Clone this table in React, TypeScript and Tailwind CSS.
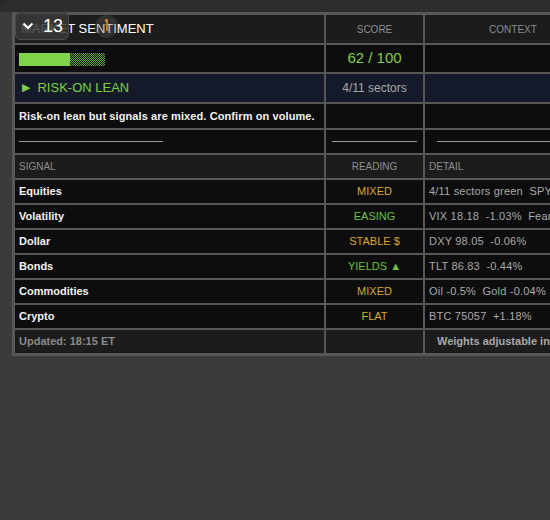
import React from "react";

type Row = { name: string; reading: string; tone: "gold" | "green"; detail: string };

const rows: Row[] = [
  { name: "Equities", reading: "MIXED", tone: "gold", detail: "4/11 sectors green  SPY +0.21%" },
  { name: "Volatility", reading: "EASING", tone: "green", detail: "VIX 18.18  -1.03%  Fear" },
  { name: "Dollar", reading: "STABLE $", tone: "gold", detail: "DXY 98.05  -0.06%" },
  { name: "Bonds", reading: "YIELDS ▲", tone: "green", detail: "TLT 86.83  -0.44%" },
  { name: "Commodities", reading: "MIXED", tone: "gold", detail: "Oil -0.5%  Gold -0.04%" },
  { name: "Crypto", reading: "FLAT", tone: "gold", detail: "BTC 75057  +1.18%" },
];

export default function App() {
  return (
    <div className="w-[550px] h-[520px] overflow-hidden bg-[#262626] font-['Liberation_Sans',Arial,sans-serif]">
      <div className="relative h-full rounded-tl-[12px] bg-[linear-gradient(to_bottom,#2d2d2d_0,#2d2d2d_12px,#3b3b3b_12px)] pl-3 pt-3">
        {/* table */}
        <div className="grid w-max grid-cols-[309px_97px_176px] gap-[2px] bg-[#575757] p-[3px]">
          {/* header */}
          <div className="flex h-[28px] items-center bg-[#1c1c1c] pl-[6px] text-[13px] text-white">MARKET SENTIMENT</div>
          <div className="flex h-[28px] items-center justify-center bg-[#1c1c1c] text-[10px] text-[#8e8e8e]">SCORE</div>
          <div className="flex h-[28px] items-center justify-center bg-[#1c1c1c] text-[10px] text-[#8e8e8e]">CONTEXT</div>

          {/* score bar */}
          <div className="flex h-[27px] items-center bg-[#0d0d0d] pl-1">
            <div className="mt-[2px] flex h-[13px] w-[86px]">
              <div className="h-full w-[51px] bg-[#7fd24a]" />
              <div className="h-full flex-1 bg-[repeating-conic-gradient(#5fa83a_0_25%,#0d0d0d_0_50%)] bg-[length:2px_2px]" />
            </div>
          </div>
          <div className="flex h-[27px] items-center justify-center bg-[#0d0d0d] text-[15px] text-[#80d047]">62 / 100</div>
          <div className="h-[27px] bg-[#0d0d0d]" />

          {/* lean */}
          <div className="flex h-[28px] items-center gap-[7px] bg-[#151a2a] pl-[7px] text-[13px] text-[#7ccf45]">
            <span className="font-['DejaVu_Sans',sans-serif] text-[11px]">▶</span>
            <span>RISK-ON LEAN</span>
          </div>
          <div className="flex h-[28px] items-center justify-center bg-[#151a2a] text-[12px] text-[#a8a8a8]">4/11 sectors</div>
          <div className="h-[28px] bg-[#151a2a]" />

          {/* summary */}
          <div className="flex h-[24px] items-center bg-[#0d0d0d] pl-1 text-[11px] font-bold tracking-[0.1px] text-[#f2f2f2]">
            Risk-on lean but signals are mixed. Confirm on volume.
          </div>
          <div className="h-[24px] bg-[#0d0d0d]" />
          <div className="h-[24px] bg-[#0d0d0d]" />

          {/* separators */}
          <div className="flex h-[23px] items-center bg-[#0d0d0d] pl-1">
            <div className="h-px w-[144px] bg-[#9c9c9c]" />
          </div>
          <div className="flex h-[23px] items-center justify-center bg-[#0d0d0d]">
            <div className="h-px w-[85px] bg-[#9c9c9c]" />
          </div>
          <div className="flex h-[23px] items-center bg-[#0d0d0d] pl-[12px]">
            <div className="h-px w-[152px] bg-[#9c9c9c]" />
          </div>

          {/* signal header */}
          <div className="flex h-[23px] items-center bg-[#1c1c1c] pl-1 text-[10px] text-[#8e8e8e]">SIGNAL</div>
          <div className="flex h-[23px] items-center justify-center bg-[#1c1c1c] text-[10px] text-[#8e8e8e]">READING</div>
          <div className="flex h-[23px] items-center bg-[#1c1c1c] pl-1 text-[10px] text-[#8e8e8e]">DETAIL</div>

          {rows.map((r) => (
            <React.Fragment key={r.name}>
              <div className="flex h-[23px] items-center bg-[#0d0d0d] pl-1 text-[11px] font-bold text-[#f2f2f2]">{r.name}</div>
              <div
                className={
                  "flex h-[23px] items-center justify-center bg-[#0d0d0d] text-[11px] " +
                  (r.tone === "gold" ? "text-[#d9a634]" : "text-[#6cc044]")
                }
              >
                {r.reading}
              </div>
              <div className="flex h-[23px] items-center whitespace-pre bg-[#0d0d0d] pl-1 text-[11px] tracking-[0.2px] text-[#a9a9a9]">
                {r.detail}
              </div>
            </React.Fragment>
          ))}

          {/* footer */}
          <div className="flex h-[23px] items-center bg-[#1c1c1c] pl-1 text-[11px] font-bold text-[#8a8a8a]">Updated: 18:15 ET</div>
          <div className="h-[23px] bg-[#1c1c1c]" />
          <div className="flex h-[23px] items-center whitespace-nowrap bg-[#1c1c1c] pl-[12px] text-[11px] font-bold text-[#a9a9a9]">
            Weights adjustable in settings
          </div>
        </div>

        {/* floating count badge */}
        <div className="absolute left-[15px] top-[12px] flex h-[28px] w-[54px] items-center gap-[9px] rounded-[5px] border border-[#4a4a4a] bg-[#383838]/85 pl-[6px]">
          <svg width="12" height="8" viewBox="0 0 12 8" fill="none">
            <polyline points="1.5,1.5 6,6 10.5,1.5" stroke="#ffffff" strokeWidth="2" />
          </svg>
          <span className="text-[18px] leading-none text-white">13</span>
        </div>

        {/* status dot */}
        <div className="absolute left-[95px] top-[15px] flex h-[23px] w-[23px] flex-col items-center rounded-full bg-[#5a5a5a]/35 pt-[4px]">
          <div className="h-[3px] w-[3px] rounded-full bg-[#e0962c]" />
          <div className="h-[9px] w-[2px] bg-[#b8802a]" />
        </div>
      </div>
    </div>
  );
}
